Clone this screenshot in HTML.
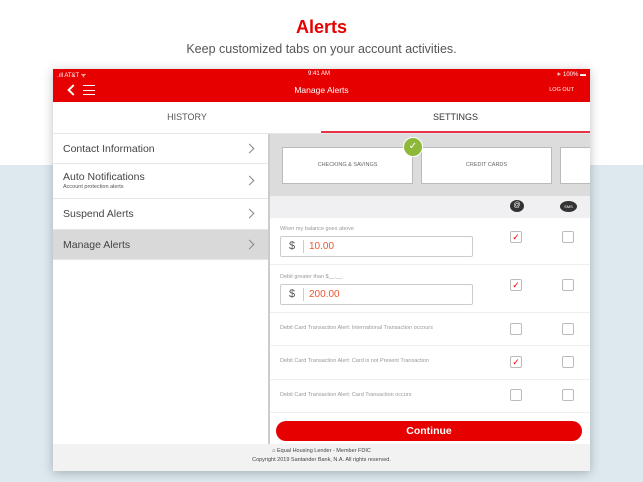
<!DOCTYPE html>
<html><head><style>
*{margin:0;padding:0;box-sizing:border-box}
body{width:643px;height:482px;overflow:hidden;font-family:"Liberation Sans",sans-serif;background:linear-gradient(#fff 0,#fff 165px,#dde9ef 165px);position:relative}
.a{position:absolute}
.t{color:#e60000;font-weight:bold;font-size:18px;left:0;width:643px;text-align:center;top:17px}
.st{color:#555;font-size:12.5px;left:0;width:643px;text-align:center;top:41px}
.dev{left:53px;top:69px;width:537px;height:402px;background:#fff;box-shadow:0 2px 10px rgba(0,0,0,.25);overflow:hidden}
.red{left:0;top:0;width:537px;height:33px;background:#e60000;color:#fff}
.row{left:0;width:215px;border-bottom:1px solid #e6e6e6;color:#444;font-size:10.5px;padding-left:10px}
.chev{right:15px;top:50%;margin-top:-4px;width:7px;height:7px;border-top:1px solid #888;border-right:1px solid #888;transform:rotate(45deg)}
.cb{width:12px;height:12px;border:1px solid #bbb;border-radius:2px;background:#fff}
.ck{color:#e60000;font-size:9px;line-height:10px;text-align:center}
.lbl{font-size:5.5px;color:#999;left:10px}
.inp{left:10px;width:193px;height:21px;border:1px solid #ccc;border-radius:2px;color:#e53;font-size:10px}
.ar{left:0;width:322px;border-bottom:1px solid #eee}
</style></head><body>
<div class="a t">Alerts</div>
<div class="a st" style="top:42px">Keep customized tabs on your account activities.</div>
<div class="a dev">
 <div class="a red">
  <div class="a" style="left:4px;top:2px;font-size:6px">.ıll AT&amp;T ᯤ</div>
  <div class="a" style="left:255px;top:2px;font-size:6px">9:41 AM</div>
  <div class="a" style="right:4px;top:2px;font-size:6px">∗ 100% ▬</div>
  <div class="a" style="left:16px;top:17px;width:8px;height:8px;border-left:2px solid #fff;border-bottom:2px solid #fff;transform:rotate(45deg)"></div>
  <div class="a" style="left:30px;top:16px;width:12px;height:10px;border-top:1.5px solid #fff;border-bottom:1.5px solid #fff"></div>
  <div class="a" style="left:30px;top:20.5px;width:12px;height:1.5px;background:#fff"></div>
  <div class="a" style="left:0;width:537px;text-align:center;top:16px;font-size:8.5px">Manage Alerts</div>
  <div class="a" style="right:16px;top:18px;font-size:5.5px">LOG OUT</div>
 </div>
 <div class="a" style="left:0;top:33px;width:537px;height:32px;border-bottom:1px solid #e6e6e6"></div>
 <div class="a" style="left:0;width:268px;top:43px;text-align:center;font-size:9px;color:#555">HISTORY</div>
 <div class="a" style="left:268px;width:269px;top:43px;text-align:center;font-size:9px;color:#333">SETTINGS</div>
 <div class="a" style="left:268px;top:62px;width:269px;height:2px;background:#e8324a"></div>
 <div class="a row" style="top:65px;height:30px;line-height:30px">Contact Information<div class="a chev"></div></div>
 <div class="a row" style="top:95px;height:35px;padding-top:7px">Auto Notifications<div style="font-size:5.5px;color:#555;margin-top:1px">Account protection alerts</div><div class="a chev"></div></div>
 <div class="a row" style="top:130px;height:31px;line-height:31px">Suspend Alerts<div class="a chev"></div></div>
 <div class="a row" style="top:161px;height:30px;line-height:30px;background:#d9d9d9">Manage Alerts<div class="a chev"></div></div>
 <div class="a" style="left:215px;top:65px;width:2px;height:310px;background:#ccc"></div>
 <div class="a" style="left:217px;top:65px;width:320px;height:62px;background:#dcdcdc">
  <div class="a" style="left:12px;top:13px;width:131px;height:37px;background:#fff;border:1px solid #bbb;font-size:5.5px;color:#666;text-align:center;line-height:35px">CHECKING &amp; SAVINGS</div>
  <div class="a" style="left:151px;top:13px;width:131px;height:37px;background:#fff;border:1px solid #bbb;font-size:5.5px;color:#666;text-align:center;line-height:35px">CREDIT CARDS</div>
  <div class="a" style="left:290px;top:13px;width:40px;height:37px;background:#fff;border:1px solid #bbb"></div>
  <div class="a" style="left:133px;top:3px;width:20px;height:20px;border-radius:50%;background:#8db83a;border:1.5px solid #fff;color:#fff;font-size:10px;text-align:center;line-height:17px">✓</div>
 </div>
 <div class="a" style="left:217px;top:127px;width:320px;height:22px;background:#f0f0f3">
  <div class="a" style="left:240px;top:4px;width:14px;height:12px;border-radius:50%;background:#333;color:#fff;font-size:7px;text-align:center;line-height:12px">@</div>
  <div class="a" style="left:290px;top:5px;width:17px;height:11px;border-radius:50%;background:#333;color:#fff;font-size:4px;text-align:center;line-height:11px">SMS</div>
 </div>
 <div class="a" style="left:217px;top:149px;width:320px;height:226px">
  <div class="a ar" style="top:0;height:47px"><div class="a lbl" style="top:8px">When my balance goes above</div><div class="a inp" style="top:18px"><span class="a" style="left:8px;top:3px;color:#555;font-size:11px">$</span><span class="a" style="left:22px;top:3px;height:13px;border-left:1px solid #ccc"></span><span class="a" style="left:28px;top:4px">10.00</span></div></div>
  <div class="a ar" style="top:47px;height:48px"><div class="a lbl" style="top:9px">Debit greater than $__.__</div><div class="a inp" style="top:19px"><span class="a" style="left:8px;top:3px;color:#555;font-size:11px">$</span><span class="a" style="left:22px;top:3px;height:13px;border-left:1px solid #ccc"></span><span class="a" style="left:28px;top:4px">200.00</span></div></div>
  <div class="a ar" style="top:95px;height:33px"><div class="a lbl" style="top:12px">Debit Card Transaction Alert: International Transaction occours</div></div>
  <div class="a ar" style="top:128px;height:34px"><div class="a lbl" style="top:12px">Debit Card Transaction Alert: Card is not Present Transaction</div></div>
  <div class="a ar" style="top:162px;height:33px"><div class="a lbl" style="top:12px">Debit Card Transaction Alert:  Card Transaction occurs</div></div>
  <div class="a cb ck" style="left:240px;top:13px">✓</div><div class="a cb" style="left:292px;top:13px"></div>
  <div class="a cb ck" style="left:240px;top:61px">✓</div><div class="a cb" style="left:292px;top:61px"></div>
  <div class="a cb" style="left:240px;top:105px"></div><div class="a cb" style="left:292px;top:105px"></div>
  <div class="a cb ck" style="left:240px;top:138px">✓</div><div class="a cb" style="left:292px;top:138px"></div>
  <div class="a cb" style="left:240px;top:171px"></div><div class="a cb" style="left:292px;top:171px"></div>
  <div class="a" style="left:6px;top:203px;width:306px;height:20px;border-radius:10px;background:#e60000;color:#fff;font-weight:bold;font-size:10.5px;text-align:center;line-height:20px">Continue</div>
 </div>
 <div class="a" style="left:0;top:375px;width:537px;height:27px;background:#f2f2f2;font-size:5.5px;color:#444;text-align:center">
  <div style="margin-top:4px">⌂ Equal Housing Lender - Member FDIC</div>
  <div style="margin-top:3px">Copyright 2019 Santander Bank, N.A. All rights reserved.</div>
 </div>
</div>
</body></html>
